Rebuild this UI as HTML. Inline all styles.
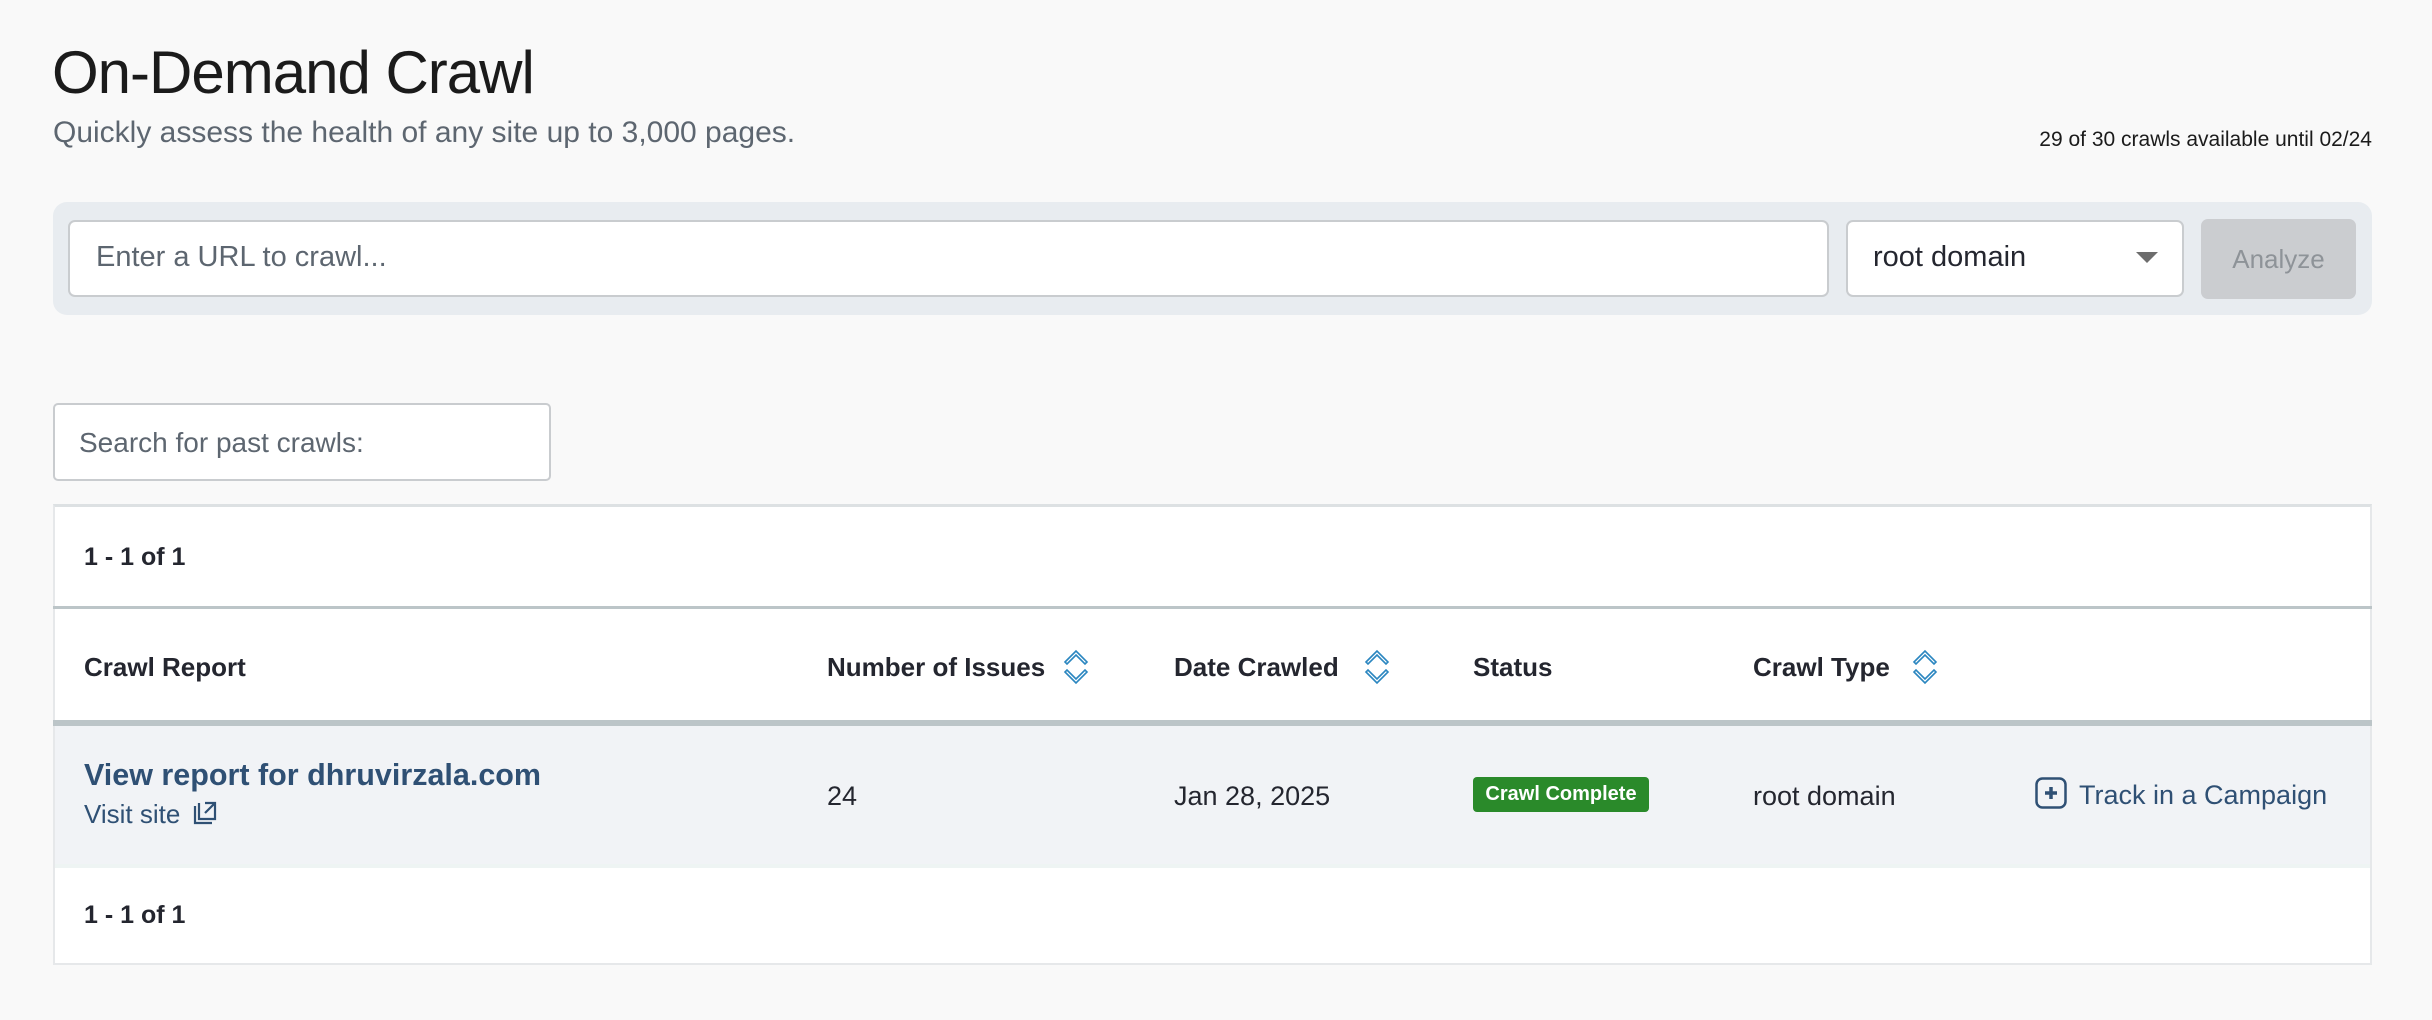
<!DOCTYPE html>
<html><head><meta charset="utf-8"><style>
*{box-sizing:border-box;margin:0;padding:0}
body{width:2432px;height:1020px;background:#f9f9f9;font-family:"Liberation Sans",sans-serif;position:relative;overflow:hidden;color:#24262f}
.a{position:absolute;white-space:nowrap}
h1{position:absolute;left:52px;top:38px;font-size:60px;font-weight:300;color:#1b1b1b;letter-spacing:-1px}
.sub{left:53px;top:116px;font-size:30px;color:#5d6670}
.avail{right:60px;top:128px;font-size:21px;color:#1b1b1b}
.bar{left:53px;top:202px;width:2319px;height:113px;background:#e8ecf0;border-radius:14px}
.inp{background:#fff;border:2px solid #c9cccf;border-radius:7px}
.hd{font-size:26px;font-weight:bold;color:#24262f}
</style></head><body>
<h1>On-Demand Crawl</h1>
<div class="a sub">Quickly assess the health of any site up to 3,000 pages.</div>
<div class="a avail">29 of 30 crawls available until 02/24</div>
<div class="a bar"></div>
<div class="a inp" style="left:68px;top:220px;width:1761px;height:77px"></div>
<div class="a" style="left:96px;top:241px;font-size:29px;color:#5d6670">Enter a URL to crawl...</div>
<div class="a inp" style="left:1846px;top:220px;width:338px;height:77px"></div>
<div class="a" style="left:1873px;top:241px;font-size:29px;color:#24262f">root domain</div>
<svg class="a" style="left:2136px;top:252px" width="22" height="12"><polygon points="0,0 22,0 11,11" fill="#6d6d6d"/></svg>
<div class="a" style="left:2201px;top:219px;width:155px;height:80px;background:#cbcdd0;border-radius:7px;font-size:26px;color:#8e9398;text-align:center;line-height:80px">Analyze</div>
<div class="a inp" style="left:53px;top:403px;width:498px;height:78px;border-radius:5px"></div>
<div class="a" style="left:79px;top:427px;font-size:28px;color:#5d6670">Search for past crawls:</div>
<div class="a" style="left:53px;top:504px;width:2319px;height:461px;background:#fff;border:2px solid #e6e8ea;border-top:3px solid #dde1e3"></div>
<div class="a hd" style="left:84px;top:543px;font-size:25px">1 - 1 of 1</div>
<div class="a" style="left:53px;top:606px;width:2319px;height:3px;background:#bcc5c8"></div>
<div class="a hd" style="left:84px;top:652px">Crawl Report</div>
<div class="a hd" style="left:827px;top:652px">Number of Issues</div>
<div class="a hd" style="left:1174px;top:652px">Date Crawled</div>
<div class="a hd" style="left:1473px;top:652px">Status</div>
<div class="a hd" style="left:1753px;top:652px">Crawl Type</div>
<svg class="a" style="left:1061px;top:647px" width="30" height="40" viewBox="0 0 30 40"><path d="M4 15 L15 4 L26 15 L24 17 L15 8 L6 17 Z M4 25 L15 36 L26 25 L24 23 L15 32 L6 23 Z" fill="none" stroke="#2a86c0" stroke-width="1.6"/></svg>
<svg class="a" style="left:1362px;top:647px" width="30" height="40" viewBox="0 0 30 40"><path d="M4 15 L15 4 L26 15 L24 17 L15 8 L6 17 Z M4 25 L15 36 L26 25 L24 23 L15 32 L6 23 Z" fill="none" stroke="#2a86c0" stroke-width="1.6"/></svg>
<svg class="a" style="left:1910px;top:647px" width="30" height="40" viewBox="0 0 30 40"><path d="M4 15 L15 4 L26 15 L24 17 L15 8 L6 17 Z M4 25 L15 36 L26 25 L24 23 L15 32 L6 23 Z" fill="none" stroke="#2a86c0" stroke-width="1.6"/></svg>
<div class="a" style="left:53px;top:720px;width:2319px;height:6px;background:#bcc5c8"></div>
<div class="a" style="left:55px;top:726px;width:2315px;height:138px;background:#f1f3f6"></div>
<div class="a" style="left:84px;top:758px;font-size:30.5px;font-weight:bold;color:#2f5074">View report for dhruvirzala.com</div>
<div class="a" style="left:84px;top:799px;font-size:26px;color:#2f5074">Visit site <svg width="26" height="26" viewBox="0 0 26 26" style="vertical-align:-3px;margin-left:4px"><path d="M3 6 V23 H20 M7 3 V19 H23 V10 M13 3 H23 V13 M23 3 L13 13" fill="none" stroke="#2f5074" stroke-width="2.2"/></svg></div>
<div class="a" style="left:827px;top:781px;font-size:27px">24</div>
<div class="a" style="left:1174px;top:781px;font-size:27px">Jan 28, 2025</div>
<div class="a" style="left:1473px;top:777px;width:176px;height:35px;background:#2a8a2a;border-radius:4px;color:#fff;font-size:20px;font-weight:bold;text-align:center;line-height:35px">Crawl Complete</div>
<div class="a" style="left:1753px;top:781px;font-size:27px">root domain</div>
<svg class="a" style="left:2035px;top:777px" width="32" height="32" viewBox="0 0 32 32"><rect x="1.5" y="1.5" width="29" height="29" rx="6" fill="none" stroke="#2f5074" stroke-width="2.5"/><path d="M16 10 V22 M10 16 H22" stroke="#2f5074" stroke-width="3.5"/></svg>
<div class="a" style="left:2079px;top:780px;font-size:27px;color:#2f5074">Track in a Campaign</div>
<div class="a" style="left:55px;top:864px;width:2315px;height:4px;background:#eef4f3"></div>
<div class="a hd" style="left:84px;top:901px;font-size:25px">1 - 1 of 1</div>
</body></html>
